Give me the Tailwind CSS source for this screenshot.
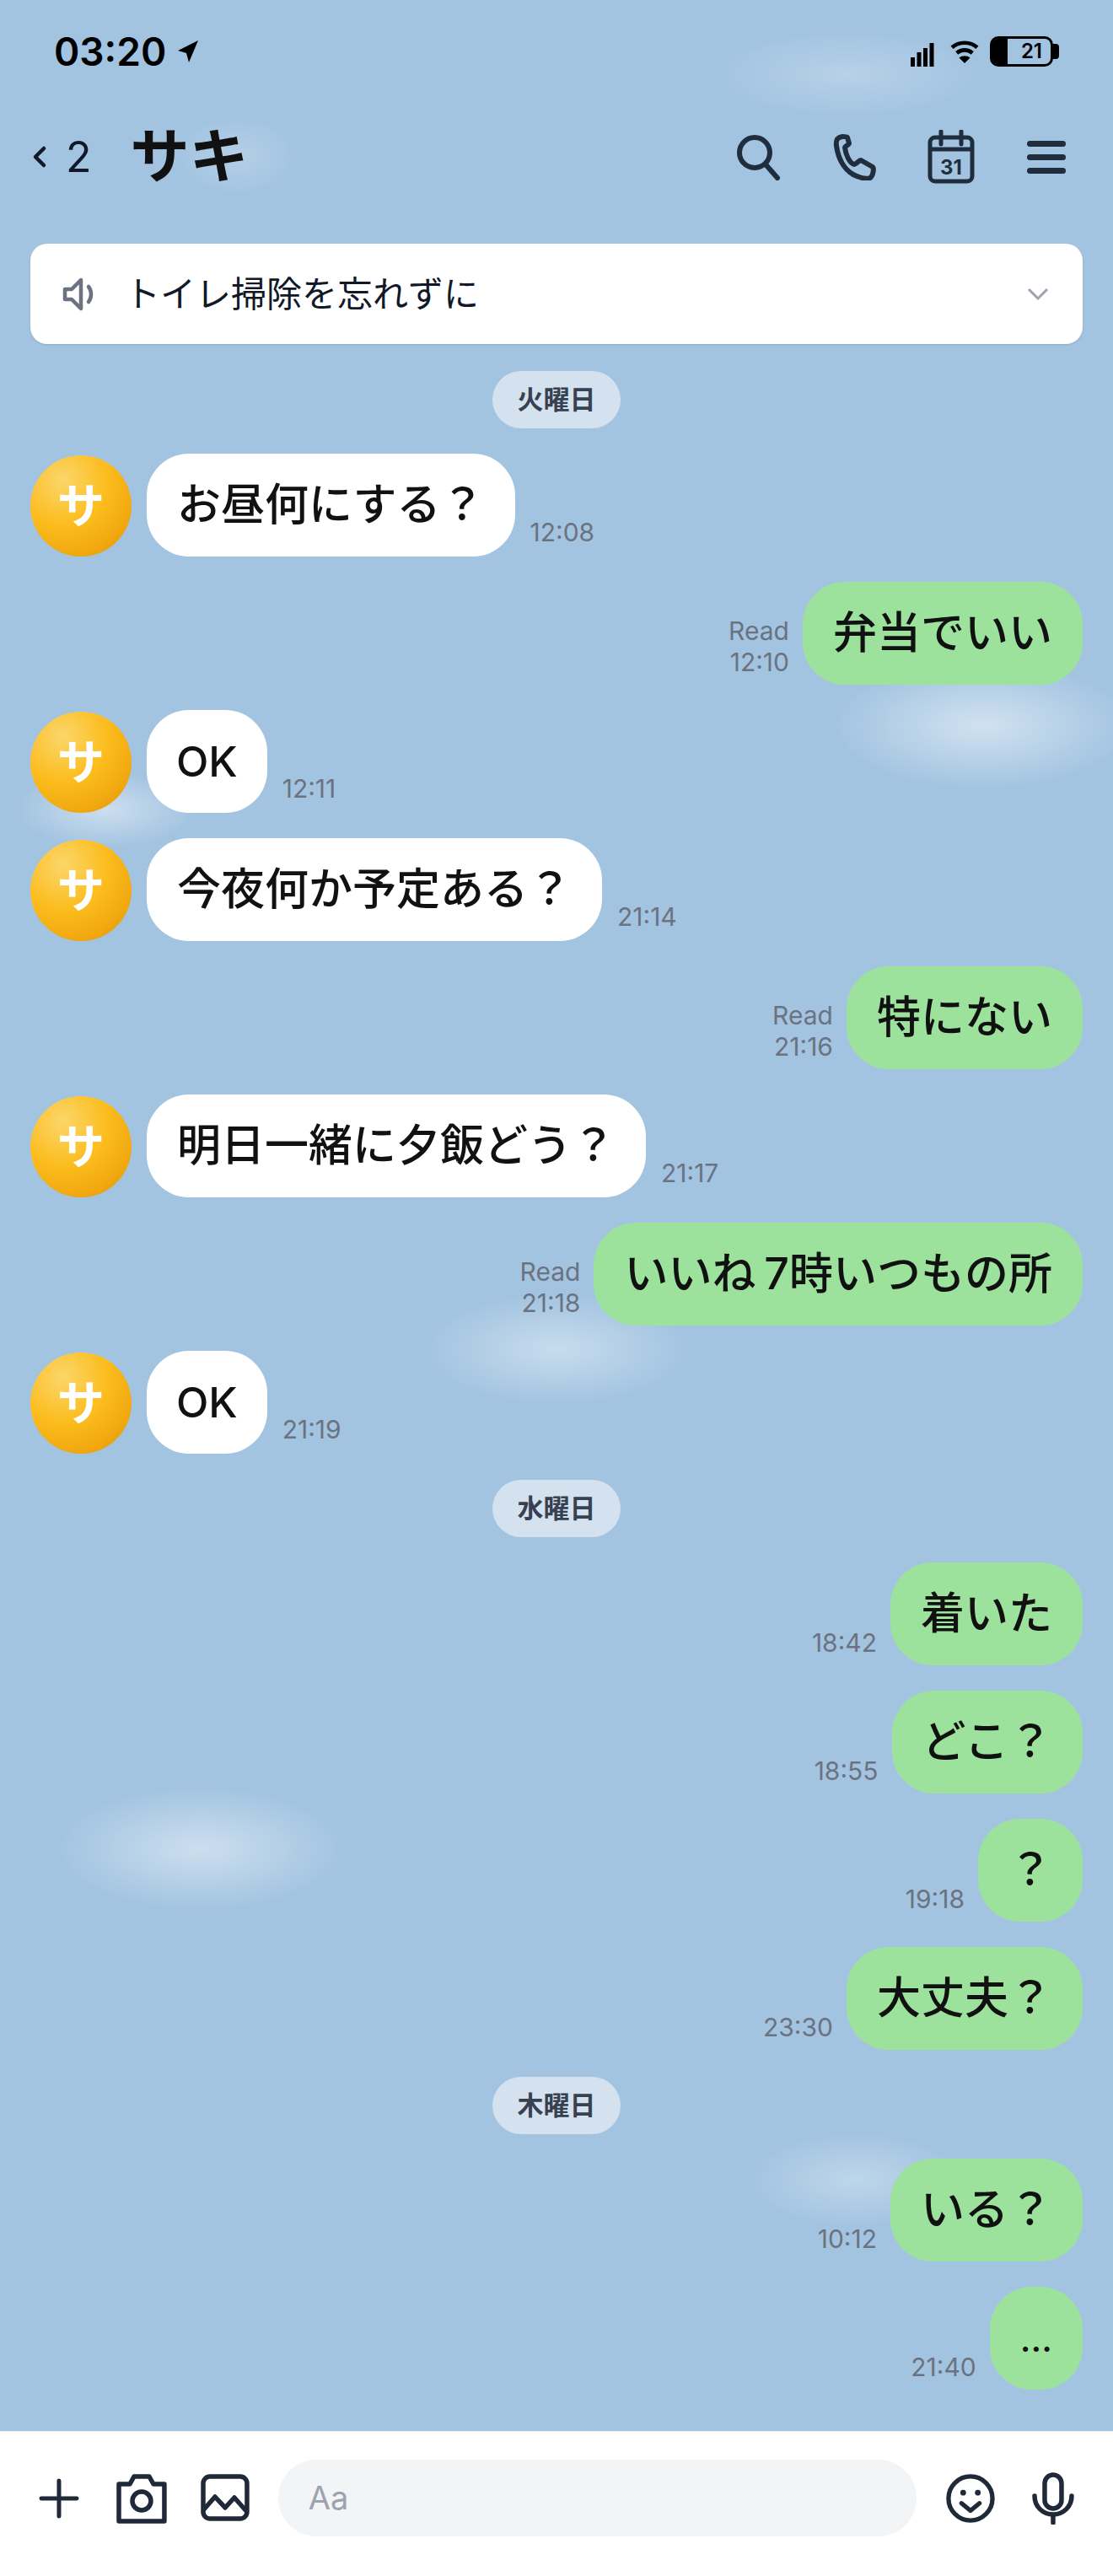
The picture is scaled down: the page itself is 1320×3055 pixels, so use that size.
<!DOCTYPE html>
<html lang="ja">
<head>
    <meta charset="UTF-8">
    <meta name="viewport" content="width=device-width, initial-scale=1.0">
    <title>サキ</title>
    <script src="https://cdn.jsdelivr.net/npm/@tailwindcss/browser@4"></script>
</head>
<body class="font-['Inter','Noto_Sans_CJK_JP',sans-serif]">
<div class="relative w-[1320px] h-[3055px] overflow-hidden bg-[#a3c4e1] flex flex-col">

    <!-- clouds -->
    <div class="absolute left-[850px] top-[38px] w-[310px] h-[100px] bg-[radial-gradient(closest-side,rgba(255,255,255,0.22),transparent)]"></div>
    <div class="absolute left-[210px] top-[140px] w-[140px] h-[90px] bg-[radial-gradient(closest-side,rgba(255,255,255,0.2),transparent)]"></div>
    <div class="absolute left-[990px] top-[785px] w-[350px] h-[150px] bg-[radial-gradient(closest-side,rgba(255,255,255,0.5),transparent)]"></div>
    <div class="absolute left-[20px] top-[915px] w-[210px] h-[90px] bg-[radial-gradient(closest-side,rgba(255,255,255,0.45),transparent)]"></div>
    <div class="absolute left-[505px] top-[1535px] w-[310px] h-[130px] bg-[radial-gradient(closest-side,rgba(255,255,255,0.4),transparent)]"></div>
    <div class="absolute left-[70px] top-[2120px] w-[335px] h-[145px] bg-[radial-gradient(closest-side,rgba(255,255,255,0.45),transparent)]"></div>
    <div class="absolute left-[890px] top-[2530px] w-[250px] h-[110px] bg-[radial-gradient(closest-side,rgba(255,255,255,0.3),transparent)]"></div>

    <!-- status bar -->
    <div class="relative h-[121px] flex items-center pl-[64px] pr-[64px] text-black">
        <span class="text-[46px] font-semibold leading-none">03:20</span>
        <svg class="ml-[13px] w-[26px] h-[28px]" viewBox="0 0 26 28"><path d="M25 1 1 13l10 3 3 11z" fill="#000"/></svg>
        <div class="ml-auto flex items-center">
            <svg class="w-[28px] h-[28px] mt-[8px]" viewBox="0 0 28 28" fill="#000"><rect x="0" y="17" width="5" height="11"/><rect x="7.5" y="11" width="5" height="17"/><rect x="15" y="6" width="5" height="22"/><rect x="22.5" y="0" width="5" height="28"/></svg>
            <svg class="ml-[19px] w-[34px] h-[28px]" viewBox="0 0 36 30" fill="none" stroke="#000" stroke-width="5"><path d="M2 10c9-8 23-8 32 0"/><path d="M8 17c6-5 14-5 20 0"/><path d="M18 30l-7-7c4-3 10-3 14 0z" fill="#000" stroke="none"/></svg>
            <div class="ml-[13px] relative w-[75px] h-[36px] rounded-[10px] border-[3px] border-black flex items-center justify-end pr-[10px]">
                <div class="absolute left-0 top-0 bottom-0 w-[18px] bg-black rounded-l-[6px]"></div>
                <span class="text-[24px] font-semibold leading-none">21</span>
            </div>
            <div class="w-[7px] h-[18px] bg-black rounded-r-[4px]"></div>
        </div>
    </div>

    <!-- header -->
    <div class="relative h-[130px] flex items-center pl-[38px] pr-[56px] text-[#111827]">
        <svg class="w-[18px] h-[30px]" viewBox="0 0 18 30" fill="none" stroke="#111827" stroke-width="4.5" stroke-linecap="round" stroke-linejoin="round"><path d="M14 5 4 15l10 10"/></svg>
        <span class="ml-[22px] text-[50px] leading-none">2</span>
        <span class="ml-[46px] text-[70px] font-bold leading-none text-[#111]">サキ</span>
        <div class="ml-auto flex items-center gap-[58px] text-[#1f2d3d]">
            <svg class="w-[56px] h-[56px]" viewBox="0 0 56 56" fill="none" stroke="currentColor" stroke-width="6" stroke-linecap="round"><circle cx="23" cy="23" r="18"/><path d="M36 37l14 16"/></svg>
            <svg class="w-[56px] h-[56px]" viewBox="0 0 56 56" fill="none" stroke="currentColor" stroke-width="6" stroke-linejoin="round"><path d="M13 4c-6 1-8 4-7 11 2 15 9 28 20 34 6 3 15 6 20 4 3-2 5-10 3-13l-14-8c-2 0-6 5-8 5-6-2-10-12-11-20 0-2 5-3 5-5L19 5c-1-1-4-1-6-1z"/></svg>
            <svg class="mr-[4px] w-[56px] h-[64px]" viewBox="0 0 56 64" fill="none" stroke="currentColor" stroke-width="5"><rect x="3" y="9" width="50" height="52" rx="6"/><path d="M3 23h50" stroke-width="5"/><path d="M16 2v15M40 2v15" stroke-linecap="round"/><text x="28" y="53" text-anchor="middle" font-family="Inter" font-size="24" font-weight="700" fill="currentColor" stroke="none">31</text></svg>
            <div class="w-[46px] flex flex-col gap-[9px]">
                <div class="h-[7px] rounded-full bg-[#1f2d3d]"></div>
                <div class="h-[7px] rounded-full bg-[#1f2d3d]"></div>
                <div class="h-[7px] rounded-full bg-[#1f2d3d]"></div>
            </div>
        </div>
    </div>

    <!-- pinned notice -->
    <div class="relative mt-[38px] mx-[36px] h-[119px] bg-white rounded-[20px] shadow-sm flex items-center pl-[38px] pr-[40px]">
        <svg class="w-[40px] h-[44px]" viewBox="0 0 40 44" fill="none" stroke="#6b7280" stroke-width="4.5" stroke-linejoin="round" stroke-linecap="round"><path d="M3 16v12h8l11 11V5L11 16z"/><path d="M31 13c4 5 4 13 0 18"/></svg>
        <span class="ml-[34px] text-[42px] leading-none text-[#111827]">トイレ掃除を忘れずに</span>
        <svg class="ml-auto w-[26px] h-[16px]" viewBox="0 0 26 16" fill="none" stroke="#9ca3af" stroke-width="3"><path d="M2 2l11 11L24 2"/></svg>
    </div>

    <!-- messages -->
    <div class="relative flex flex-col px-[36px] text-[52px] font-medium text-[#111]">
        <div class="self-center mt-[32px] mb-[30px] w-[152px] h-[68px] rounded-full bg-[#d4e1ee] flex items-center justify-center text-[31px] font-semibold text-[#374151]">火曜日</div>

        <div class="flex items-end">
            <div class="w-[120px] h-[120px] rounded-full bg-[radial-gradient(circle_at_32%_25%,#fcd66a,#fbbc1c_45%,#f0a70f_75%,#d98a06)] flex items-center justify-center text-[56px] font-bold text-white">サ</div>
            <div class="ml-[18px] h-[122px] px-[36px] rounded-[50px] bg-white flex items-center">お昼何にする？</div>
            <div class="ml-[18px] mb-[10px] text-[30px] font-normal leading-[37px] text-[#6b7280]">12:08</div>
        </div>

        <div class="mt-[30px] flex items-end justify-end">
            <div class="mr-[16px] mb-[8px] text-right text-[30px] font-normal leading-[37px] text-[#6b7280]">Read<br>12:10</div>
            <div class="h-[122px] px-[36px] rounded-[50px] bg-[#9de29c] flex items-center">弁当でいい</div>
        </div>

        <div class="mt-[30px] flex items-end">
            <div class="w-[120px] h-[120px] rounded-full bg-[radial-gradient(circle_at_32%_25%,#fcd66a,#fbbc1c_45%,#f0a70f_75%,#d98a06)] flex items-center justify-center text-[56px] font-bold text-white">サ</div>
            <div class="ml-[18px] h-[122px] px-[35px] rounded-[50px] bg-white flex items-center text-[50px]">OK</div>
            <div class="ml-[18px] mb-[10px] text-[30px] font-normal leading-[37px] text-[#6b7280]">12:11</div>
        </div>

        <div class="mt-[30px] flex items-end">
            <div class="w-[120px] h-[120px] rounded-full bg-[radial-gradient(circle_at_32%_25%,#fcd66a,#fbbc1c_45%,#f0a70f_75%,#d98a06)] flex items-center justify-center text-[56px] font-bold text-white">サ</div>
            <div class="ml-[18px] h-[122px] px-[36px] rounded-[50px] bg-white flex items-center">今夜何か予定ある？</div>
            <div class="ml-[18px] mb-[10px] text-[30px] font-normal leading-[37px] text-[#6b7280]">21:14</div>
        </div>

        <div class="mt-[30px] flex items-end justify-end">
            <div class="mr-[16px] mb-[8px] text-right text-[30px] font-normal leading-[37px] text-[#6b7280]">Read<br>21:16</div>
            <div class="h-[122px] px-[36px] rounded-[50px] bg-[#9de29c] flex items-center">特にない</div>
        </div>

        <div class="mt-[30px] flex items-end">
            <div class="w-[120px] h-[120px] rounded-full bg-[radial-gradient(circle_at_32%_25%,#fcd66a,#fbbc1c_45%,#f0a70f_75%,#d98a06)] flex items-center justify-center text-[56px] font-bold text-white">サ</div>
            <div class="ml-[18px] h-[122px] px-[36px] rounded-[50px] bg-white flex items-center">明日一緒に夕飯どう？</div>
            <div class="ml-[18px] mb-[10px] text-[30px] font-normal leading-[37px] text-[#6b7280]">21:17</div>
        </div>

        <div class="mt-[30px] flex items-end justify-end">
            <div class="mr-[16px] mb-[8px] text-right text-[30px] font-normal leading-[37px] text-[#6b7280]">Read<br>21:18</div>
            <div class="h-[122px] px-[36px] rounded-[50px] bg-[#9de29c] flex items-center whitespace-pre [word-spacing:-4px]">いいね 7時いつもの所</div>
        </div>

        <div class="mt-[30px] flex items-end">
            <div class="w-[120px] h-[120px] rounded-full bg-[radial-gradient(circle_at_32%_25%,#fcd66a,#fbbc1c_45%,#f0a70f_75%,#d98a06)] flex items-center justify-center text-[56px] font-bold text-white">サ</div>
            <div class="ml-[18px] h-[122px] px-[35px] rounded-[50px] bg-white flex items-center text-[50px]">OK</div>
            <div class="ml-[18px] mb-[10px] text-[30px] font-normal leading-[37px] text-[#6b7280]">21:19</div>
        </div>

        <div class="self-center mt-[31px] mb-[30px] w-[152px] h-[68px] rounded-full bg-[#d4e1ee] flex items-center justify-center text-[31px] font-semibold text-[#374151]">水曜日</div>

        <div class="flex items-end justify-end">
            <div class="mr-[16px] mb-[8px] text-[30px] font-normal leading-[37px] text-[#6b7280]">18:42</div>
            <div class="h-[122px] px-[36px] rounded-[50px] bg-[#9de29c] flex items-center">着いた</div>
        </div>
        <div class="mt-[30px] flex items-end justify-end">
            <div class="mr-[16px] mb-[8px] text-[30px] font-normal leading-[37px] text-[#6b7280]">18:55</div>
            <div class="h-[122px] px-[36px] rounded-[50px] bg-[#9de29c] flex items-center">どこ？</div>
        </div>
        <div class="mt-[30px] flex items-end justify-end">
            <div class="mr-[16px] mb-[8px] text-[30px] font-normal leading-[37px] text-[#6b7280]">19:18</div>
            <div class="h-[122px] px-[36px] rounded-[50px] bg-[#9de29c] flex items-center">？</div>
        </div>
        <div class="mt-[30px] flex items-end justify-end">
            <div class="mr-[16px] mb-[8px] text-[30px] font-normal leading-[37px] text-[#6b7280]">23:30</div>
            <div class="h-[122px] px-[36px] rounded-[50px] bg-[#9de29c] flex items-center">大丈夫？</div>
        </div>

        <div class="self-center mt-[32px] mb-[29px] w-[152px] h-[68px] rounded-full bg-[#d4e1ee] flex items-center justify-center text-[31px] font-semibold text-[#374151]">木曜日</div>

        <div class="flex items-end justify-end">
            <div class="mr-[16px] mb-[8px] text-[30px] font-normal leading-[37px] text-[#6b7280]">10:12</div>
            <div class="h-[122px] px-[36px] rounded-[50px] bg-[#9de29c] flex items-center">いる？</div>
        </div>
        <div class="mt-[30px] flex items-end justify-end">
            <div class="mr-[16px] mb-[8px] text-[30px] font-normal leading-[37px] text-[#6b7280]">21:40</div>
            <div class="h-[122px] px-[36px] rounded-[50px] bg-[#9de29c] flex items-center text-[42px]">…</div>
        </div>
    </div>

    <!-- input bar -->
    <div class="relative mt-auto h-[172px] bg-white border-t border-[#eef2f6] flex items-center pl-[46px] pr-[46px] pb-[14px] text-[#1f2937]">
        <svg class="w-[48px] h-[48px]" viewBox="0 0 48 48" fill="none" stroke="currentColor" stroke-width="5" stroke-linecap="round"><path d="M24 3v42M3 24h42"/></svg>
        <svg class="ml-[44px] w-[60px] h-[60px]" viewBox="0 0 60 60" fill="none" stroke="currentColor" stroke-width="5.5" stroke-linejoin="round"><path d="M3 13h13l5-9h18l5 9h13v44H3z"/><circle cx="30" cy="33" r="11"/></svg>
        <svg class="ml-[40px] w-[58px] h-[58px]" viewBox="0 0 58 58" fill="none" stroke="currentColor" stroke-width="5.5" stroke-linejoin="round"><rect x="3" y="3" width="52" height="50" rx="8"/><path d="M3 43l14-16 12 13 11-12 15 17"/></svg>
        <div class="ml-[34px] w-[758px] h-[91px] rounded-full bg-[#f2f4f6] flex items-center pl-[36px] text-[38px] text-[#9ca3af]">Aa</div>
        <svg class="ml-[35px] w-[58px] h-[60px]" viewBox="0 0 60 60" fill="none" stroke="currentColor" stroke-width="5.5" stroke-linecap="round" stroke-linejoin="round"><circle cx="30" cy="30" r="27"/><circle cx="21" cy="23" r="3.5" fill="currentColor" stroke="none"/><circle cx="39" cy="23" r="3.5" fill="currentColor" stroke="none"/><path d="M19 36l11 9 11-9"/></svg>
        <svg class="ml-[44px] w-[50px] h-[62px]" viewBox="0 0 50 62" fill="none" stroke="currentColor" stroke-width="5.5" stroke-linecap="round"><rect x="15" y="3" width="20" height="40" rx="10"/><path d="M3 28c0 13 10 22 22 22s22-9 22-22M25 50v10"/></svg>
    </div>
</div>
</body>
</html>
